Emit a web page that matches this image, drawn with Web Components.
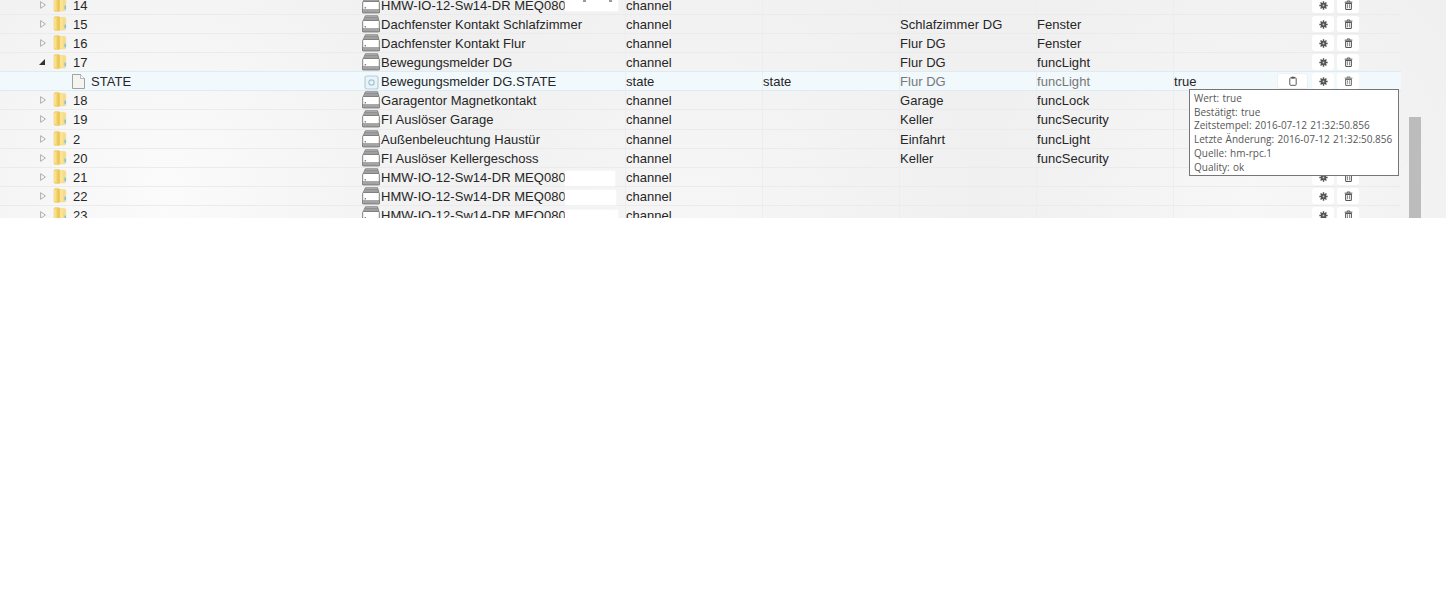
<!DOCTYPE html>
<html lang="de">
<head>
<meta charset="utf-8">
<title>Objekte</title>
<style>
  html, body { margin: 0; background: #fff; font-family: "Liberation Sans", Arial, sans-serif; }
</style>
</head>
<body>
<template id="icon-folder">
  <svg width="14" height="15" viewBox="0 0 14 15">
    <path d="M1 2 Q1 .6 2.6 .6 H5.6 V14.6 H2.6 Q1 14.6 1 13 Z" fill="#f5d772" stroke="#e8c765" stroke-width=".5"/>
    <path d="M5.6 1.4 H11.4 Q12.8 1.4 12.8 3 V12.4 Q12.8 14 11.4 14 H5.6 Z" fill="#f9e394" stroke="#ecd07a" stroke-width=".5"/>
    <path d="M4.4 .8 H6.8 V14.4 H4.4 Z" fill="#eec456"/>
    <path d="M2 2 V13" stroke="#fae9a8" stroke-width="1"/>
    <path d="M11 2.6 V12.6" stroke="#f3d67e" stroke-width="1.2"/>
    <rect x="11.4" y="8.6" width="1.6" height="3.6" fill="#7fc3dc"/>
  </svg>
</template>
<template id="icon-device">
  <svg width="18" height="18" viewBox="0 0 18 18">
    <path d="M3.4 .8 H15.6 L16.8 5.4 H1.4 Z" fill="#c2c2c2" stroke="#6f6f6f" stroke-width=".8"/>
    <path d="M3.2 2.4 H15.8 M2.6 3.9 H16.2" stroke="#7d7d7d" stroke-width=".8"/>
    <rect x=".7" y="5.4" width="16.6" height="11.4" rx="1" fill="#fff" stroke="#6f6f6f" stroke-width=".9"/>
    <rect x=".7" y="13.8" width="16.6" height="3" fill="#b4b4b4" stroke="#6f6f6f" stroke-width=".7"/>
    <path d="M2 15.3 H16" stroke="#818181" stroke-width=".7" stroke-dasharray="1 .6"/>
    <rect x="2.6" y="11.2" width="1.4" height="1.2" fill="#666"/>
  </svg>
</template>
<template id="icon-state">
  <svg width="15" height="15" viewBox="0 0 15 15">
    <rect x="1" y="1" width="13" height="13" rx="2" fill="#e9f3f8" stroke="#b4cfdc" stroke-width="1.2"/>
    <circle cx="7.5" cy="7.5" r="2.6" fill="none" stroke="#a6c4d2" stroke-width="1.2"/>
  </svg>
</template>
<template id="icon-doc">
  <svg width="13" height="15" viewBox="0 0 13 15">
    <path d="M.5 .5 H8.5 L12.5 4.5 V14.5 H.5 Z" fill="#f4f4f1" stroke="#8d8d8d" stroke-width=".8"/>
    <path d="M8.5 .5 V4.5 H12.5" fill="#fff" stroke="#9a9a9a" stroke-width=".7"/>
  </svg>
</template>
<template id="icon-gear">
  <svg width="9" height="9" viewBox="0 0 11 11">
    <g stroke="#555" stroke-width="1.8">
      <path d="M5.5 .4 V10.6 M.4 5.5 H10.6 M1.9 1.9 L9.1 9.1 M9.1 1.9 L1.9 9.1"/>
    </g>
    <circle cx="5.5" cy="5.5" r="3.4" fill="#555"/>
    <circle cx="5.5" cy="5.5" r="1.1" fill="#ccc"/>
  </svg>
</template>
<template id="icon-trash">
  <svg width="9" height="10" viewBox="0 0 11 12">
    <path d="M.8 2.5 H10.2 M4 2.5 V1 H7 V2.5" fill="none" stroke="#555" stroke-width="1.1"/>
    <path d="M2 4 H9 V10.2 Q9 11.4 8 11.4 H3 Q2 11.4 2 10.2 Z" fill="none" stroke="#555" stroke-width="1.3"/>
    <path d="M4.3 5 V10 M6.7 5 V10" stroke="#777" stroke-width="1"/>
  </svg>
</template>
<template id="icon-clipboard">
  <svg width="8" height="10" viewBox="0 0 10 12">
    <rect x="1" y="2" width="8" height="9.4" rx="1" fill="none" stroke="#555" stroke-width="1.2"/>
    <rect x="3" y=".6" width="4" height="2.4" fill="#555"/>
  </svg>
</template>

<script>
class IoIcon extends HTMLElement {
  constructor() {
    super();
    this.attachShadow({ mode: 'open' });
  }
  connectedCallback() {
    this.shadowRoot.innerHTML = `<style>
      :host { display: inline-flex; align-items: center; justify-content: center; flex: none; }
      svg { display: block; }
    </style>`;
    const tpl = document.getElementById('icon-' + this.getAttribute('name'));
    this.shadowRoot.appendChild(tpl.content.cloneNode(true));
  }
}
customElements.define('io-icon', IoIcon);

class IoButton extends HTMLElement {
  constructor() {
    super();
    this.attachShadow({ mode: 'open' });
  }
  connectedCallback() {
    this.shadowRoot.innerHTML = `<style>
      :host {
        display: flex; align-items: center; justify-content: center;
        width: 22px; height: 16px; flex: none;
        background: #fff; border-radius: 3px;
      }
      :host([wide]) { width: 31px; box-sizing: border-box; border: 1px solid #f0f0f0; }
      :host([dim]) io-icon { opacity: .85; }
    </style>
    <io-icon name="${this.getAttribute('icon')}"></io-icon>`;
  }
}
customElements.define('io-button', IoButton);

class IoRow extends HTMLElement {
  constructor() {
    super();
    this.attachShadow({ mode: 'open' });
  }
  connectedCallback() {
    const a = n => this.getAttribute(n) || '';
    const isState = this.hasAttribute('state');
    const arrow = isState ? '' : this.hasAttribute('open')
      ? '<svg class="arrow open" width="6" height="6" viewBox="0 0 6 6"><path d="M0 6 H6 V0 Z" fill="#333"/></svg>'
      : '<svg class="arrow" width="6" height="8" viewBox="0 0 6 8"><path d="M.6 .7 L5.4 4 L.6 7.3 Z" fill="#f8f8f8" stroke="#a6a6a6" stroke-width=".9"/></svg>';
    let mask = '';
    if (a('mask')) {
      const [w, t, h] = a('mask').split(' ');
      mask = `<span class="mask${this.hasAttribute('remnant') ? ' remnant' : ''}" style="width:${w}px;top:${t}px;height:${h}px"></span>`;
    }
    this.shadowRoot.innerHTML = `<style>
      :host {
        display: grid;
        grid-template-columns: 362px 263px 137px 137px 137px 137px 1fr;
        height: 19px; box-sizing: border-box;
        border-bottom: 1px solid #ebebeb;
        font-size: 13px; line-height: 18px; color: #262626;
        letter-spacing: .03px;
        white-space: nowrap;
      }
      :host([tall]) { height: 20px; }
      :host([state]) {
        background: #f1f9fd;
        border-bottom-color: #dcecf5;
        box-shadow: 0 -1px 0 #dcecf5;
      }
      .cell {
        border-left: 1px solid #ededed; padding-top: 1px; min-width: 0;
        display: flex; align-items: flex-start; position: relative;
      }
      .name { border-left: 0; padding-left: 40px; }
      .arrow { flex: none; margin: 4px 7px 0 0; }
      .arrow.open { margin: 5px 8px 0 -1px; }
      .name io-icon { margin-right: 6px; }
      :host([state]) .name { padding-left: 72px; }
      :host([state]) .name io-icon { margin: 1px 6px 0 0; }
      .id { border-left: 0; }
      .id io-icon { width: 18px; margin: -1px 1px 0 0; }
      :host([state]) .id io-icon { margin-top: 2px; }
      .mask { position: absolute; left: 203px; background: #fff; box-shadow: 0 0 2px #fff; }
      .mask.remnant { background: repeating-linear-gradient(90deg, #fff 0 18px, #9a9a9a 18px 21px, #fff 21px 26px) 0 0 / 100% 2px no-repeat, #fff; }
      :host([state]) .soft { color: #777; }
      .gap { flex: none; }
    </style>
    <div class="cell name">${arrow}<io-icon name="${isState ? 'doc' : 'folder'}"></io-icon><span>${a('label')}</span></div>
    <div class="cell id"><io-icon name="${isState ? 'state' : 'device'}"></io-icon><span>${a('objname')}</span>${mask}</div>
    <div class="cell">${a('type')}</div>
    <div class="cell">${a('role')}</div>
    <div class="cell soft">${a('room')}</div>
    <div class="cell soft">${a('func')}</div>
    <div class="cell">
      <span class="gap" style="width:103px">${a('value')}</span>
      ${a('value') ? '<io-button wide icon="clipboard"></io-button>' : '<span class="gap" style="width:31px"></span>'}
      <span class="gap" style="width:4px"></span>
      <io-button icon="gear"></io-button>
      <span class="gap" style="width:3px"></span>
      <io-button icon="trash" ${isState ? 'dim' : ''}></io-button>
    </div>`;
  }
}
customElements.define('io-row', IoRow);

class IoTooltip extends HTMLElement {
  constructor() {
    super();
    this.attachShadow({ mode: 'open' });
    this.shadowRoot.innerHTML = `<style>
      :host {
        position: absolute; left: 1189px; top: 89px;
        box-sizing: border-box; width: 210px; height: 87px;
        padding: 2px 4px; background: #fff;
        border: 1px solid #767676;
        font: 10px/13.7px "Open Sans", sans-serif; color: #575757;
        word-spacing: .7px;
        white-space: pre-line;
      }
    </style><slot></slot>`;
  }
}
customElements.define('io-tooltip', IoTooltip);

class IoScrollbar extends HTMLElement {
  constructor() {
    super();
    this.attachShadow({ mode: 'open' });
    this.shadowRoot.innerHTML = `<style>
      :host { display: block; width: 12px; flex: none; margin: 117px 0 0 8px; background: #bcbcbc; }
    </style>`;
  }
}
customElements.define('io-scrollbar', IoScrollbar);

class IoTable extends HTMLElement {
  constructor() {
    super();
    this.attachShadow({ mode: 'open' });
    this.shadowRoot.innerHTML = `<style>
      :host {
        display: flex; position: relative; height: 218px; overflow: hidden;
        background:
          radial-gradient(circle at 166px 190px, #fbfbfb 0, #f7f7f7 110px, rgba(241,241,241,0) 300px),
          radial-gradient(circle at 1250px 200px, #f7f7f7 0, rgba(241,241,241,0) 260px),
          radial-gradient(circle at 700px 210px, #f6f6f6 0, rgba(241,241,241,0) 280px),
          #f0f0f0;
      }
      .rows { width: 1401px; flex: none; margin-top: -4px; }
    </style>
    <div class="rows"><slot></slot></div>
    <io-scrollbar></io-scrollbar>
    <slot name="overlay"></slot>`;
  }
}
customElements.define('io-table', IoTable);
</script>

<io-table>
  <io-row label="14" objname="HMW-IO-12-Sw14-DR MEQ080" mask="53 4 11" remnant type="channel"></io-row>
  <io-row label="15" objname="Dachfenster Kontakt Schlafzimmer" type="channel" room="Schlafzimmer DG" func="Fenster"></io-row>
  <io-row label="16" objname="Dachfenster Kontakt Flur" type="channel" room="Flur DG" func="Fenster"></io-row>
  <io-row open label="17" objname="Bewegungsmelder DG" type="channel" room="Flur DG" func="funcLight"></io-row>
  <io-row state label="STATE" objname="Bewegungsmelder DG.STATE" type="state" role="state" room="Flur DG" func="funcLight" value="true"></io-row>
  <io-row label="18" objname="Garagentor Magnetkontakt" type="channel" room="Garage" func="funcLock"></io-row>
  <io-row tall label="19" objname="FI Auslöser Garage" type="channel" room="Keller" func="funcSecurity"></io-row>
  <io-row label="2" objname="Außenbeleuchtung Haustür" type="channel" room="Einfahrt" func="funcLight"></io-row>
  <io-row label="20" objname="FI Auslöser Kellergeschoss" type="channel" room="Keller" func="funcSecurity"></io-row>
  <io-row label="21" objname="HMW-IO-12-Sw14-DR MEQ080" mask="50 3 15" type="channel"></io-row>
  <io-row label="22" objname="HMW-IO-12-Sw14-DR MEQ080" mask="51 3 15" type="channel"></io-row>
  <io-row label="23" objname="HMW-IO-12-Sw14-DR MEQ080" mask="53 4 15" type="channel"></io-row>
  <io-tooltip slot="overlay">Wert: true
Bestätigt: true
Zeitstempel: 2016-07-12 21:32:50.856
Letzte Änderung: 2016-07-12 21:32:50.856
Quelle: hm-rpc.1
Quality: ok</io-tooltip>
</io-table>
</body>
</html>
